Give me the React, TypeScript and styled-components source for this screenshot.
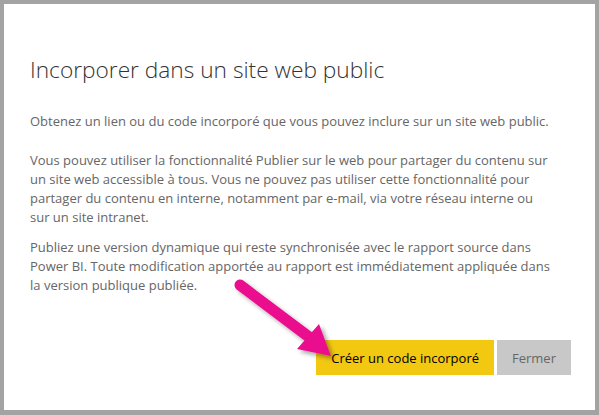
import React from "react";
import styled, { createGlobalStyle } from "styled-components";

const Global = createGlobalStyle`
  html, body { margin: 0; padding: 0; background: #a3a3a3; }
  body { width: 599px; height: 415px; overflow: hidden; }
`;

const Frame = styled.div`
  position: relative;
  box-sizing: border-box;
  margin: 4px 4px 5px 4px;
  width: 591px;
  height: 406px;
  background: #ffffff;
  padding: 51px 24px 35px 26px;
  display: flex;
  flex-direction: column;
  font-family: "Open Sans", "Noto Sans", sans-serif;
`;

const Title = styled.h1`
  margin: 0 0 27px 0;
  font-family: "Open Sans", sans-serif;
  font-weight: 300;
  font-size: 22.7px;
  line-height: 30px;
  color: #333333;
`;

const Paragraph = styled.p<{ $gap?: number }>`
  margin: 0 0 ${(p) => p.$gap ?? 11}px 0;
  font-size: 13px;
  line-height: 19px;
  color: #666666;
  white-space: nowrap;
`;

const Actions = styled.div`
  margin-top: auto;
  display: flex;
  justify-content: flex-end;
  gap: 3px;
`;

const Button = styled.button<{ $primary?: boolean }>`
  height: 35px;
  padding: 0 15px;
  border: none;
  font-family: "Open Sans", sans-serif;
  font-size: 13px;
  background: ${(p) => (p.$primary ? "#f2c811" : "#c8c8c8")};
  color: ${(p) => (p.$primary ? "#000000" : "#666666")};
  cursor: pointer;
`;

const ArrowLayer = styled.svg`
  position: absolute;
  left: 0;
  top: 0;
  width: 599px;
  height: 415px;
  pointer-events: none;
  overflow: visible;
`;

function Arrow() {
  return (
    <ArrowLayer viewBox="0 0 599 415">
      <defs>
        <filter id="sh" x="-20%" y="-20%" width="140%" height="140%">
          <feDropShadow dx="3" dy="3" stdDeviation="2" floodColor="#000" floodOpacity="0.35" />
        </filter>
      </defs>
      <g filter="url(#sh)">
        <line x1="240" y1="285" x2="309" y2="337" stroke="#ea118d" strokeWidth="11" strokeLinecap="round" />
        <polygon points="297,349 319,324 331,356" fill="#ea118d" />
      </g>
    </ArrowLayer>
  );
}

export default function App() {
  return (
    <>
      <Global />
      <Frame>
        <Title>Incorporer dans un site web public</Title>
        <Paragraph $gap={20}>
          Obtenez un lien ou du code incorporé que vous pouvez inclure sur un site web public.
        </Paragraph>
        <Paragraph>
          Vous pouvez utiliser la fonctionnalité Publier sur le web pour partager du contenu sur
          <br />
          un site web accessible à tous. Vous ne pouvez pas utiliser cette fonctionnalité pour
          <br />
          partager du contenu en interne, notamment par e-mail, via votre réseau interne ou
          <br />
          sur un site intranet.
        </Paragraph>
        <Paragraph>
          Publiez une version dynamique qui reste synchronisée avec le rapport source dans
          <br />
          Power BI. Toute modification apportée au rapport est immédiatement appliquée dans
          <br />
          la version publique publiée.
        </Paragraph>
        <Actions>
          <Button $primary>Créer un code incorporé</Button>
          <Button>Fermer</Button>
        </Actions>
      </Frame>
      <Arrow />
    </>
  );
}
